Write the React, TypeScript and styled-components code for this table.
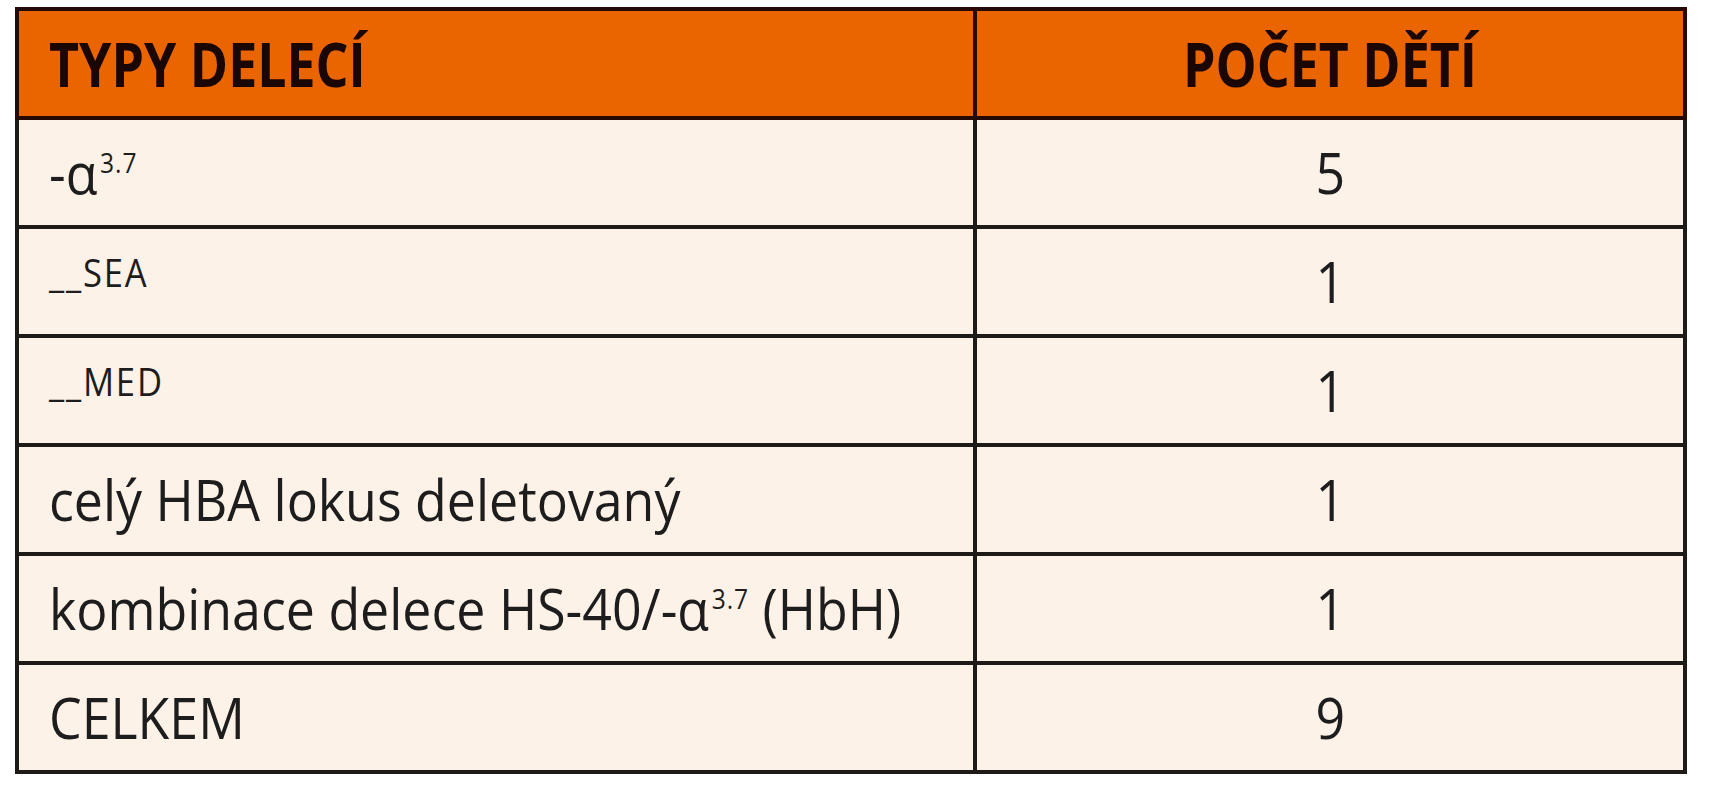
import React from 'react'
import styled, { createGlobalStyle } from 'styled-components'

const GlobalStyle = createGlobalStyle`
  html, body {
    margin: 0;
    padding: 0;
    background: #ffffff;
  }
  body {
    font-family: 'Open Sans', 'Liberation Sans', sans-serif;
  }
`

const Page = styled.div`
  padding: 7px 0 0 15px;
`

const Table = styled.table`
  width: 1672px;
  border-collapse: collapse;
  table-layout: fixed;
  border: 4px solid #1c1410;
`

const HeadCell = styled.th<{ $center?: boolean }>`
  height: 105px;
  padding: ${(p) => (p.$center ? '0' : '0 0 0 30px')};
  background: #ea6400;
  border: 4px solid #240a02;
  color: #1a0602;
  font-size: 61px;
  font-weight: 700;
  line-height: 1;
  text-align: ${(p) => (p.$center ? 'center' : 'left')};
  white-space: nowrap;
`

const Cell = styled.td<{ $center?: boolean }>`
  height: 105px;
  padding: ${(p) => (p.$center ? '0' : '0 0 0 30px')};
  background: #fdf2e8;
  border: 4px solid #1e1a17;
  color: #1d1d1d;
  font-size: 57px;
  font-weight: 400;
  line-height: 1;
  text-align: ${(p) => (p.$center ? 'center' : 'left')};
  white-space: nowrap;
`

// the source face is a condensed sans, so squeeze Open Sans a little
const Squeeze = styled.span<{ $center?: boolean; $ratio?: number }>`
  display: inline-block;
  transform: scaleX(${(p) => p.$ratio ?? 0.91});
  transform-origin: ${(p) => (p.$center ? 'center' : 'left')} center;
`

const Sup = styled.span`
  font-size: 27px;
  vertical-align: 21px;
  margin-left: 3px;
  letter-spacing: 1px;
`

const Locus = styled.span`
  font-size: 38px;
  vertical-align: 16px;
  letter-spacing: 2px;
`

type Row = {
  label: React.ReactNode
  count: string
}

const rows: Row[] = [
  {
    label: (
      <>
        -α<Sup>3.7</Sup>
      </>
    ),
    count: '5',
  },
  { label: <Locus>__SEA</Locus>, count: '1' },
  { label: <Locus>__MED</Locus>, count: '1' },
  { label: 'celý HBA lokus deletovaný', count: '1' },
  {
    label: (
      <>
        kombinace delece HS-40/-α<Sup>3.7</Sup> (HbH)
      </>
    ),
    count: '1',
  },
  { label: 'CELKEM', count: '9' },
]

export default function App() {
  return (
    <Page>
      <GlobalStyle />
      <Table>
        <colgroup>
          <col style={{ width: 958 }} />
          <col />
        </colgroup>
        <thead>
          <tr>
            <HeadCell>
              <Squeeze $ratio={0.85}>TYPY DELECÍ</Squeeze>
            </HeadCell>
            <HeadCell $center>
              <Squeeze $center $ratio={0.85}>
                POČET DĚTÍ
              </Squeeze>
            </HeadCell>
          </tr>
        </thead>
        <tbody>
          {rows.map((row, i) => (
            <tr key={i}>
              <Cell>
                <Squeeze>{row.label}</Squeeze>
              </Cell>
              <Cell $center>
                <Squeeze $center>{row.count}</Squeeze>
              </Cell>
            </tr>
          ))}
        </tbody>
      </Table>
    </Page>
  )
}
